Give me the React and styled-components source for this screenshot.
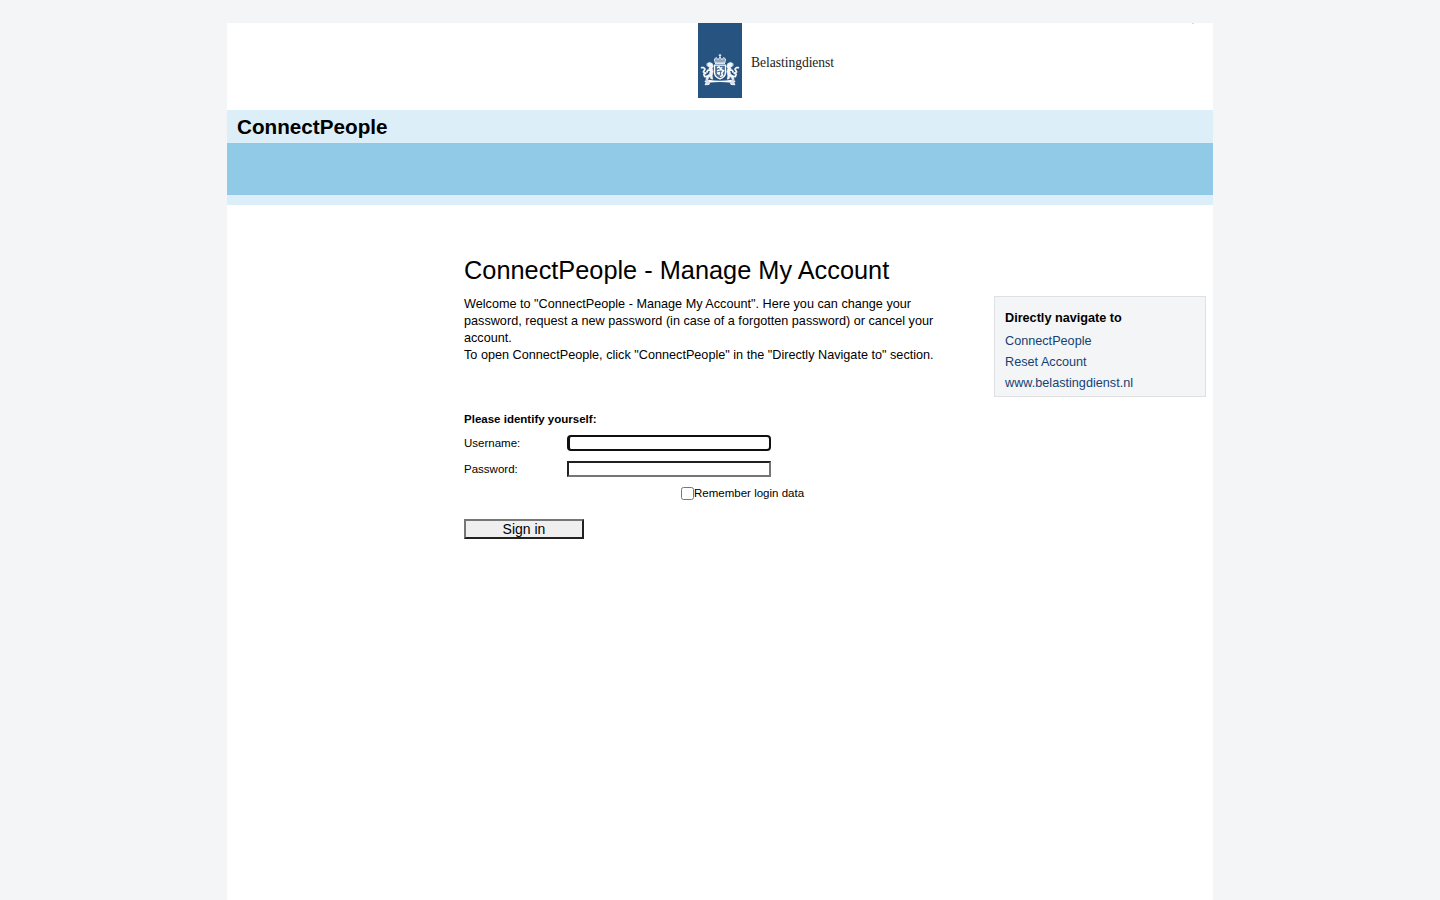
import React from "react";
import styled, { createGlobalStyle } from "styled-components";

const GlobalStyle = createGlobalStyle`
  * { box-sizing: border-box; }
  body {
    margin: 0;
    background: #f3f5f7;
    color: #000;
    font: 12.66px/17px "Liberation Sans", Arial, sans-serif;
  }
`;

const Page = styled.div`
  width: 986px;
  min-height: 877px;
  margin: 23px auto 0;
  background: #fff;
`;

const LogoBar = styled.header`
  display: flex;
  align-items: flex-start;
  height: 87px;
  padding-left: 471px;
`;

const Ribbon = styled.div`
  width: 44px;
  height: 75px;
  padding: 30px 2px 0;
  background: #275380;
  svg { display: block; }
`;

const LogoName = styled.span`
  margin: 31px 0 0 9px;
  font: 13.6px/18px "Liberation Serif", serif;
  letter-spacing: -0.05px;
  color: #222;
`;

const TopMark = styled.span`
  width: 2px;
  height: 1px;
  margin: 0 19px 0 auto;
  background: #d5dee7;
`;

const Banner = styled.div`
  height: 33px;
  padding-left: 10px;
  background: #dceff9;
  font-size: 20.7px;
  font-weight: bold;
  line-height: 33px;
`;

const NavBand = styled.div`
  height: 62px;
  background: #90cae7;
  border-bottom: 10px solid #dceff9;
`;

const Content = styled.div`
  display: flex;
  align-items: flex-start;
  justify-content: space-between;
  padding: 49px 7px 0 237px;
`;

const Main = styled.main`
  width: 484px;
`;

const Heading = styled.h1`
  margin: 0 0 10px;
  font-size: 25.33px;
  font-weight: normal;
  line-height: 32px;
`;

const Intro = styled.p`
  margin: 0;
`;

const Aside = styled.aside`
  width: 212px;
  height: 101px;
  margin-top: 42px;
  padding: 12px 10px 0;
  background: #f3f5f7;
  border: 1px solid #dfe0e1;
`;

const AsideTitle = styled.h2`
  margin: 0 0 4px;
  font-size: 12.66px;
  line-height: 18px;
`;

const AsideLink = styled.a`
  display: block;
  line-height: 21px;
  color: #154273;
  text-decoration: none;
`;

const Form = styled.form`
  margin-top: 46px;
  font-size: 11.52px;
`;

const FormTitle = styled.div`
  height: 18px;
  margin-bottom: 7px;
  font-weight: bold;
  line-height: 18px;
`;

const Field = styled.label`
  display: grid;
  grid-template-columns: 103px 204px;
  height: 16px;
  margin-bottom: 10px;
  line-height: 17px;
`;

const Input = styled.input`
  width: 204px;
  height: 16px;
  padding: 0;
  background: #fff;
  border: 2px inset #767676;
  border-radius: 0;
  outline: none;
  ${(p) => p.$active && `
    border: 2px solid #101010;
    border-left-width: 3px;
    border-radius: 4px;
  `}
`;

const Remember = styled.label`
  display: flex;
  align-items: center;
  height: 14px;
  margin: -1px 0 0 217px;
`;

const Checkbox = styled.input`
  width: 13px;
  height: 13px;
  margin: 0;
`;

const SignIn = styled.button`
  display: block;
  width: 120px;
  height: 20px;
  margin-top: 19px;
  padding: 0;
  background: #efefef;
  border: 2px outset #767676;
  border-radius: 0;
  color: #000;
  font: 14px/16px "Liberation Sans", Arial, sans-serif;
`;

const Lion = () => (
  <g fill="none" stroke="#f4f7fa" strokeLinecap="round" strokeLinejoin="round">
    <path d="M7.2 10.6 9.6 9.4l2.6 1.2 1 2.8-1 2 .9 3.2-1 4.2.6 3.4-2-.6-.6-2.2-1.6 1.2-.6 1.8-2 .1 1-3.4 2.6-2.2.6-2.6-1.2-2.2.6-2.3-2-.7Z" fill="#f4f7fa" strokeWidth=".7" />
    <path d="m10.5 17-2.8.4-.8 1.6" strokeWidth="1.7" />
    <path d="M8 23 4.6 23.6l-.8-2.4 2-1-2.4-1.2 1.6-3-1.4-1.4-2 .1" strokeWidth="1.7" />
  </g>
);

const CoatOfArms = () => (
  <svg width="40" height="34" viewBox="0 0 40 34" aria-hidden="true">
    <g fill="none" stroke="#dfe7ee">
      <path d="M15.2 10 14.4 6l2-1.5L18 6.8 20 4l2 2.8 1.6-2.3 2 1.5-.8 4Z" strokeWidth="1" fill="#8da5bd" />
      <path d="M15 10.3h10M20 1v3.2M18.8 2.3h2.4" strokeWidth="1.2" />
    </g>
    <Lion />
    <g transform="translate(40 0) scale(-1 1)"><Lion /></g>
    <path d="M14.5 12.2h11v7.2q0 4.3-5.5 6.6-5.5-2.3-5.5-6.6Z" fill="#4b6f95" stroke="#fff" strokeWidth="1.3" />
    <path d="m17 14.7 2.2-.8 1.1 1.7 2-1.2M17 17.7l3.8-1.2 2.6 1.1-1.8 2.6 1 2.2-2.6 1.2M17 20.3l2.2-.6-.4 2.3" fill="none" stroke="#fff" strokeWidth="1.5" />
    <path d="M8.2 26.8q11.8 2 23.6 0v3q-11.8-1.8-23.6 0Z" fill="#fff" />
    <path d="m8.4 27.5-3.5.6 1.2 1.6-1 2.1 4-.4.3-1.8M31.6 27.5l3.5.6-1.2 1.6 1 2.1-4-.4-.3-1.8" fill="#d5dfe8" stroke="#f4f7fa" strokeWidth="1" />
  </svg>
);

export default function App() {
  return (
    <>
      <GlobalStyle />
      <Page>
        <LogoBar>
          <Ribbon><CoatOfArms /></Ribbon>
          <LogoName>Belastingdienst</LogoName>
          <TopMark />
        </LogoBar>
        <Banner>ConnectPeople</Banner>
        <NavBand />
        <Content>
          <Main>
            <Heading>ConnectPeople - Manage My Account</Heading>
            <Intro>
              Welcome to "ConnectPeople - Manage My Account". Here you can change your
              password, request a new password (in case of a forgotten password) or cancel your account.
              <br />
              To open ConnectPeople, click "ConnectPeople" in the "Directly Navigate to" section.
            </Intro>
            <Form onSubmit={(e) => e.preventDefault()}>
              <FormTitle>Please identify yourself:</FormTitle>
              <Field>Username:<Input type="text" $active /></Field>
              <Field>Password:<Input type="password" /></Field>
              <Remember><Checkbox type="checkbox" />Remember login data</Remember>
              <SignIn type="submit">Sign in</SignIn>
            </Form>
          </Main>
          <Aside>
            <AsideTitle>Directly navigate to</AsideTitle>
            <AsideLink href="#">ConnectPeople</AsideLink>
            <AsideLink href="#">Reset Account</AsideLink>
            <AsideLink href="#">www.belastingdienst.nl</AsideLink>
          </Aside>
        </Content>
      </Page>
    </>
  );
}
